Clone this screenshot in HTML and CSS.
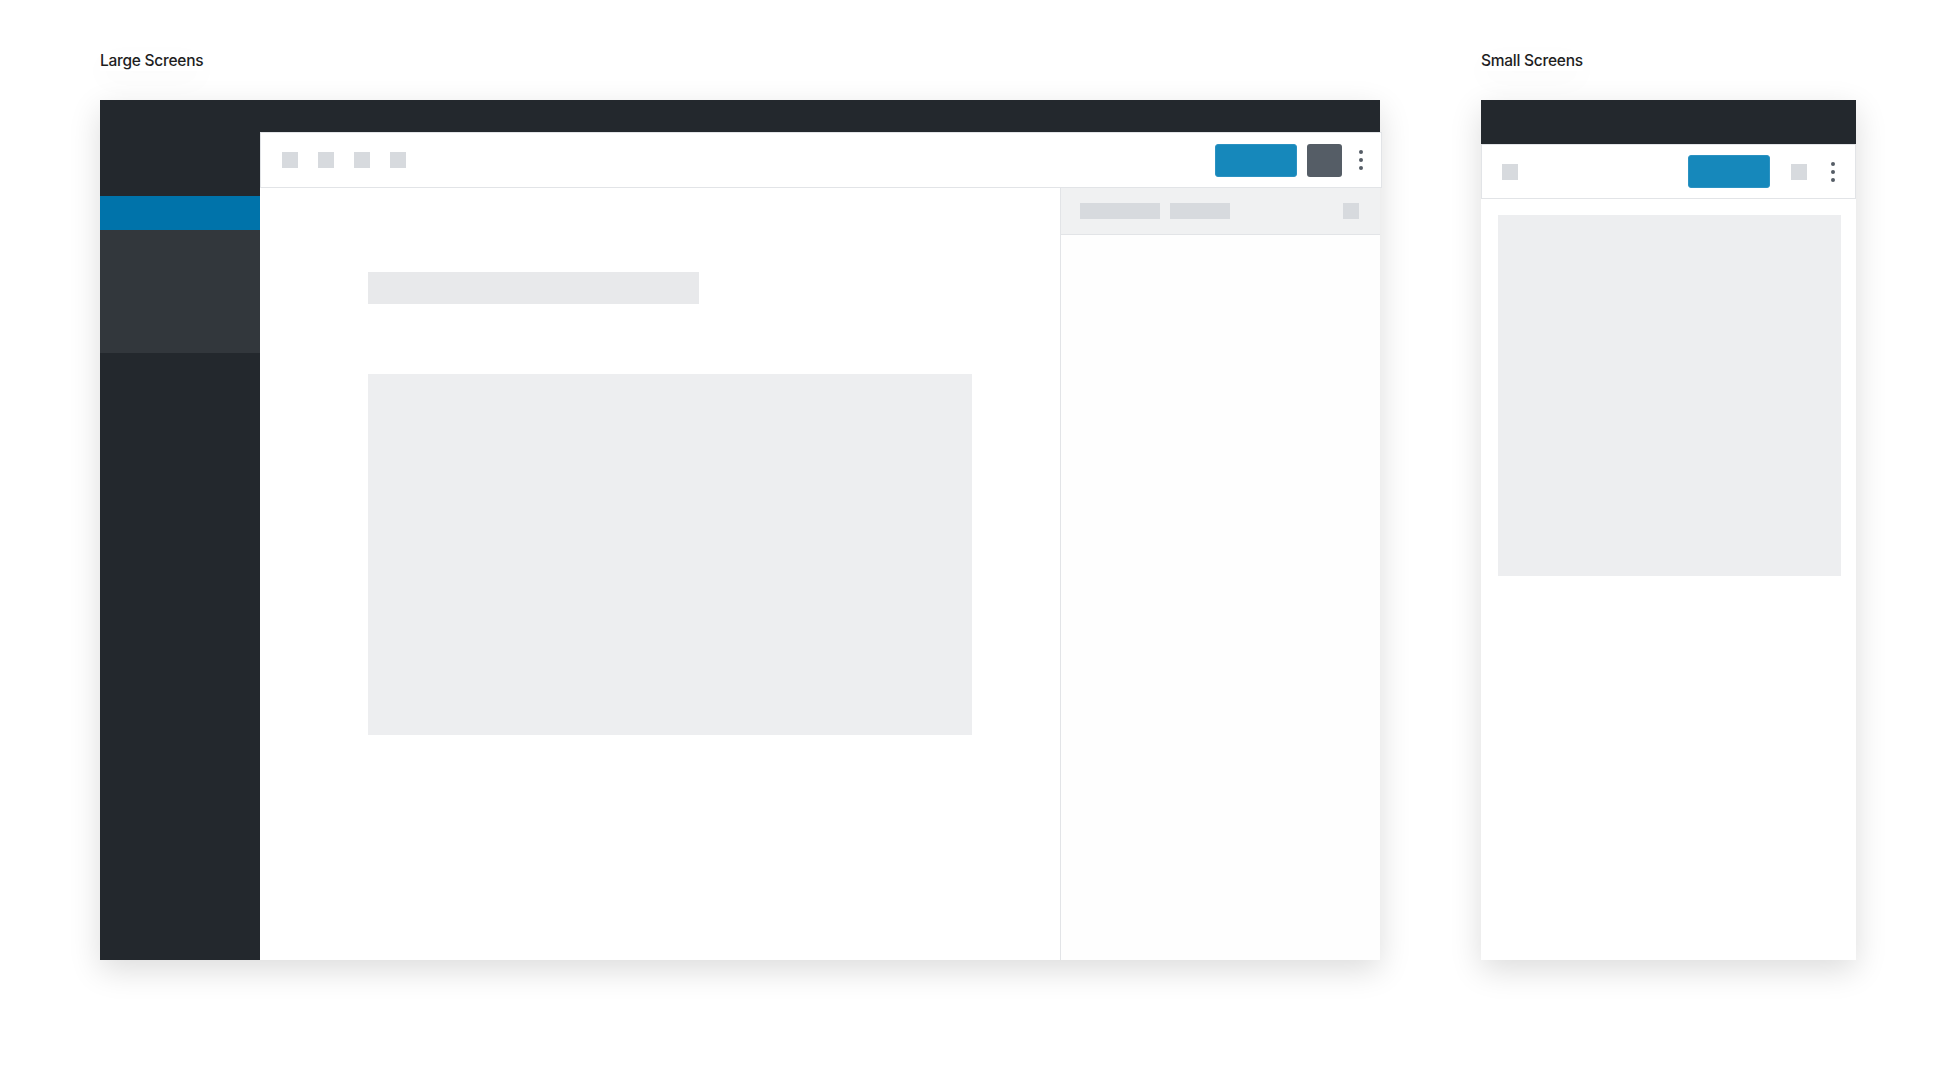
FILE: index.html
```html
<!DOCTYPE html>
<html lang="en">
<head>
<meta charset="utf-8">
<title>Editor layouts</title>
<link rel="stylesheet" href="styles.css">
</head>
<body>
<div class="page">
  <section class="col col-large">
    <div class="label">Large Screens</div>
    <div class="frame frame-large">
      <aside class="admin-menu">
        <div class="menu-top"></div>
        <div class="menu-active"></div>
        <div class="menu-sub"></div>
      </aside>
      <div class="workspace">
        <div class="adminbar"></div>
        <div class="editor">
          <div class="toolbar">
            <div class="tools">
              <span class="sq"></span><span class="sq"></span><span class="sq"></span><span class="sq"></span>
            </div>
            <div class="actions">
              <span class="btn-primary"></span>
              <span class="btn-dark"></span>
              <svg class="dots" width="4" height="20" viewBox="0 0 4 20"><circle cx="2" cy="2" r="2"/><circle cx="2" cy="10" r="2"/><circle cx="2" cy="18" r="2"/></svg>
            </div>
          </div>
          <div class="editor-body">
            <main class="canvas">
              <div class="ph-title"></div>
              <div class="ph-image"></div>
            </main>
            <aside class="settings">
              <div class="settings-header">
                <span class="tab tab-1"></span>
                <span class="tab tab-2"></span>
                <span class="sq close"></span>
              </div>
            </aside>
          </div>
        </div>
      </div>
    </div>
  </section>
  <section class="col col-small">
    <div class="label">Small Screens</div>
    <div class="frame frame-small">
      <div class="adminbar adminbar-small"></div>
      <div class="toolbar toolbar-small">
        <div class="tools">
          <span class="sq"></span>
        </div>
        <div class="actions">
          <span class="btn-primary"></span>
          <span class="sq sq-settings"></span>
          <svg class="dots" width="4" height="20" viewBox="0 0 4 20"><circle cx="2" cy="2" r="2"/><circle cx="2" cy="10" r="2"/><circle cx="2" cy="18" r="2"/></svg>
        </div>
      </div>
      <div class="ph-block"></div>
    </div>
  </section>
</div>
</body>
</html>
```

FILE: styles.css
```css
* { box-sizing: border-box; }

html, body {
  margin: 0;
  padding: 0;
  background: #ffffff;
}

body {
  font-family: Inter, "Noto Sans", "Liberation Sans", sans-serif;
  color: #1e1e1e;
}

.page {
  display: flex;
  align-items: flex-start;
  gap: 101px;
  padding: 51px 0 0 100px;
  min-height: 1080px;
}

.col {
  display: flex;
  flex-direction: column;
  align-items: flex-start;
}

.label {
  font-size: 15.5px;
  line-height: 20px;
  font-weight: 500;
  letter-spacing: -0.25px;
  margin-bottom: 29px;
  box-shadow: 0 10px 30px rgba(0, 0, 0, 0.025);
}

.frame {
  height: 860px;
  box-shadow: 0 10px 30px rgba(0, 0, 0, 0.14);
}

/* ---------- Large ---------- */
.frame-large {
  width: 1280px;
  display: flex;
  background: #23282d;
}

.admin-menu {
  width: 160px;
  flex: none;
  display: flex;
  flex-direction: column;
}

.menu-top { height: 96px; }
.menu-active { height: 34px; background: #0073aa; }
.menu-sub { height: 123px; background: #32373c; }

.workspace {
  flex: 1;
  display: flex;
  flex-direction: column;
  min-width: 0;
}

.adminbar {
  height: 32px;
  flex: none;
  background: #23282d;
}

.editor {
  flex: 1;
  display: flex;
  flex-direction: column;
  background: #ffffff;
}

.toolbar {
  height: 56px;
  flex: none;
  display: flex;
  align-items: center;
  justify-content: space-between;
  border: 1px solid #e2e4e7;
  background: #ffffff;
  padding: 0 18px 0 21px;
  margin-right: -2px;
}

.tools {
  display: flex;
  align-items: center;
  gap: 20px;
}

.sq {
  display: block;
  width: 16px;
  height: 16px;
  background: #d7dade;
}

.actions {
  display: flex;
  align-items: center;
}

.btn-primary {
  display: block;
  width: 82px;
  height: 33px;
  border-radius: 3px;
  background: #1688bb;
  border: 1px solid #2b92c2;
}

.btn-dark {
  display: block;
  width: 35px;
  height: 33px;
  border-radius: 3px;
  background: #555d66;
  margin-left: 10px;
}

.dots {
  display: block;
  fill: #555d66;
  margin-left: 17px;
}

.editor-body {
  flex: 1;
  display: flex;
}

.canvas {
  width: 800px;
  flex: none;
  padding: 84px 0 0 108px;
}

.ph-title {
  width: 331px;
  height: 32px;
  background: #e8e9eb;
}

.ph-image {
  width: 604px;
  height: 361px;
  margin-top: 70px;
  background: #edeef0;
}

.settings {
  flex: 1;
  border-left: 1px solid #e2e4e7;
  background: #fefefe;
}

.settings-header {
  height: 47px;
  display: flex;
  align-items: center;
  padding: 0 21px 0 19px;
  background: #f0f1f2;
  border-bottom: 1px solid #e2e4e7;
}

.tab {
  display: block;
  height: 16px;
  background: #d7dade;
}

.tab-1 { width: 80px; }
.tab-2 { width: 60px; margin-left: 10px; }
.close { margin-left: auto; }

/* ---------- Small ---------- */
.frame-small {
  width: 375px;
  display: flex;
  flex-direction: column;
  background: #ffffff;
}

.adminbar-small { height: 44px; }

.toolbar-small {
  height: 55px;
  margin-right: 0;
  padding: 0 20px 0 20px;
}

.toolbar-small .btn-primary { margin-right: 21px; }

.toolbar-small .dots { margin-left: 24px; }

.ph-block {
  height: 361px;
  margin: 16px 15px 0 17px;
  background: #edeef0;
}
```
